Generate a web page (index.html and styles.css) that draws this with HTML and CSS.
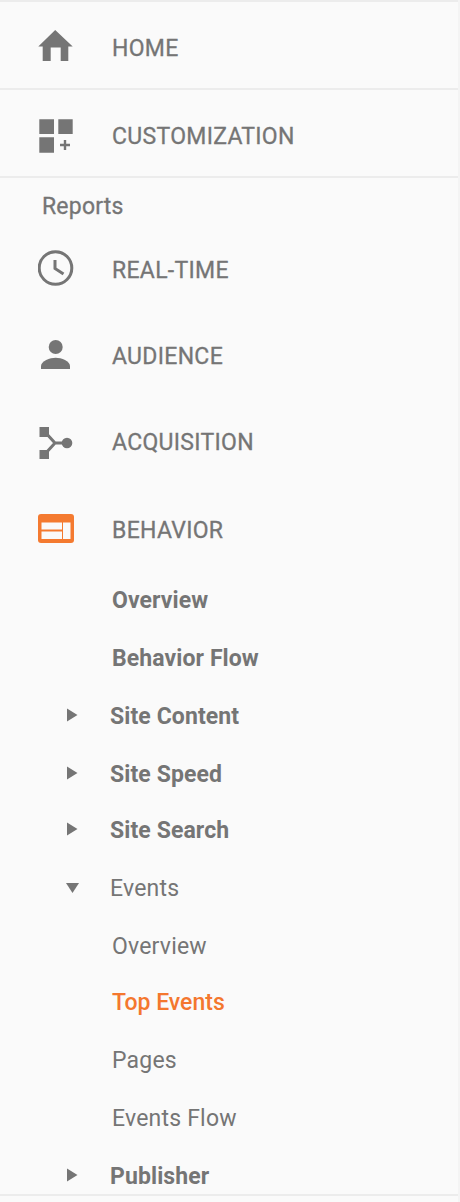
FILE: index.html
```html
<!DOCTYPE html>
<html lang="en">
<head>
<meta charset="utf-8">
<title>Reports navigation</title>
<link rel="stylesheet" href="styles.css">
</head>
<body>
<nav class="nav">
  <div class="top-row">
    <svg class="icon" viewBox="0 0 36 36"><path d="M17.200 0L34.700 16.500H30.300V31H22.700V17.600H12.700V31H4.700V16.500H0.300Z"/></svg>
    <span class="cap">HOME</span>
  </div>
  <div class="top-row">
    <svg class="icon" viewBox="0 0 36 36"><path d="M1.300 1.300H16V16H1.300ZM20.300 1.300H34.700V16H20.300ZM1.300 19.300H16V34.700H1.300ZM25.800 22H28.200V25.800H32V28.200H28.200V32H25.800V28.200H22V25.800H25.800Z"/></svg>
    <span class="cap">CUSTOMIZATION</span>
  </div>
  <div class="reports">Reports</div>
  <div class="main-row">
    <svg class="icon lift" viewBox="0 0 36 36"><circle cx="17.500" cy="18" r="16.300" fill="none" stroke="#757575" stroke-width="3"/><path d="M17 10V18.500L25.500 24" fill="none" stroke="#757575" stroke-width="3"/></svg>
    <span class="cap">REAL-TIME</span>
  </div>
  <div class="main-row">
    <svg class="icon" viewBox="0 0 36 36"><circle cx="17.700" cy="9" r="7"/><path d="M3 31V28C3 23 12 19.700 17.700 19.700S32 23 32 28V31Z"/></svg>
    <span class="cap">AUDIENCE</span>
  </div>
  <div class="main-row acq">
    <svg class="icon" viewBox="0 0 36 36"><path d="M1.500 3H11V13H1.500ZM1.500 26H11V35H1.500Z"/><circle cx="29" cy="19" r="5.300"/><path d="M7 8L17 19H29M17 19L7 30" fill="none" stroke="#757575" stroke-width="3"/></svg>
    <span class="cap">ACQUISITION</span>
  </div>
  <div class="main-row beh">
    <svg class="icon lift-small" viewBox="0 0 36 29"><rect width="36" height="29" rx="3" fill="#f47a30"/><path class="white" d="M3.500 8.500H24V15.500H3.500ZM3.500 17.500H24V25H3.500ZM25 8.500H32.500V25H25Z"/></svg>
    <span class="cap">BEHAVIOR</span>
  </div>
  <div class="sub-list">
    <div class="sub strong">Overview</div>
    <div class="sub strong">Behavior Flow</div>
    <div class="tree strong"><svg class="tri" viewBox="0 0 12 14"><path d="M1 0.500L11.500 7L1 13.500Z"/></svg>Site Content</div>
    <div class="tree strong"><svg class="tri" viewBox="0 0 12 14"><path d="M1 0.500L11.500 7L1 13.500Z"/></svg>Site Speed</div>
    <div class="tree strong tight"><svg class="tri" viewBox="0 0 12 14"><path d="M1 0.500L11.500 7L1 13.500Z"/></svg>Site Search</div>
    <div class="tree"><svg class="tri-down" viewBox="0 0 14 12"><path d="M0 0.500H14L7 11.500Z"/></svg>Events</div>
    <div class="sub">Overview</div>
    <div class="sub active tight">Top Events</div>
    <div class="sub">Pages</div>
    <div class="sub">Events Flow</div>
    <div class="tree strong"><svg class="tri" viewBox="0 0 12 14"><path d="M1 0.500L11.500 7L1 13.500Z"/></svg>Publisher</div>
  </div>
</nav>
</body>
</html>
```
FILE: styles.css
```css
* { box-sizing: border-box; }
html, body { margin: 0; padding: 0; height: 100%; }
body { background: #fafafa; color: #757575; font-family: Roboto, "Liberation Sans", sans-serif; font-size: 23px; letter-spacing: .2px; border-right: 2px solid #f4f4f4; overflow: hidden; }
.nav { height: 1196px; border-top: 2px solid #ececec; border-bottom: 2px solid #ececec; overflow: hidden; }
svg { fill: #757575; display: block; flex: none; }
.white { fill: #fafafa; }
.icon { width: 36px; height: 36px; margin-right: 38px; }
.lift { margin-top: -4px; }
.lift-small { height: 29px; margin-top: -3px; }
.top-row { height: 88px; padding: 6px 0 0 38px; display: flex; align-items: center; border-bottom: 2px solid #ececec; }
.cap { font-weight: 400; letter-spacing: .3px; -webkit-text-stroke: .3px #757575; }
.reports { height: 49px; padding: 14px 0 0 42px; line-height: 30px; font-weight: 400; -webkit-text-stroke: .3px #757575; }
.main-row { height: 86px; padding-left: 38px; display: flex; align-items: center; }
.acq { height: 88px; padding-bottom: 2px; }
.beh { height: 84px; padding-top: 2px; }
.sub { height: 58px; padding-left: 112px; line-height: 60px; }
.tree { height: 58px; padding-left: 66px; display: flex; align-items: center; }
.tri { width: 12px; height: 14px; margin: -3px 32px 0 0; }
.tri-down { width: 13px; height: 12px; margin: -1px 31px 0 0; }
.strong { font-weight: 700; letter-spacing: .1px; }
.tight { margin-top: -2px; }
.active { color: #f4772e; font-weight: 500; letter-spacing: 0; }
```
